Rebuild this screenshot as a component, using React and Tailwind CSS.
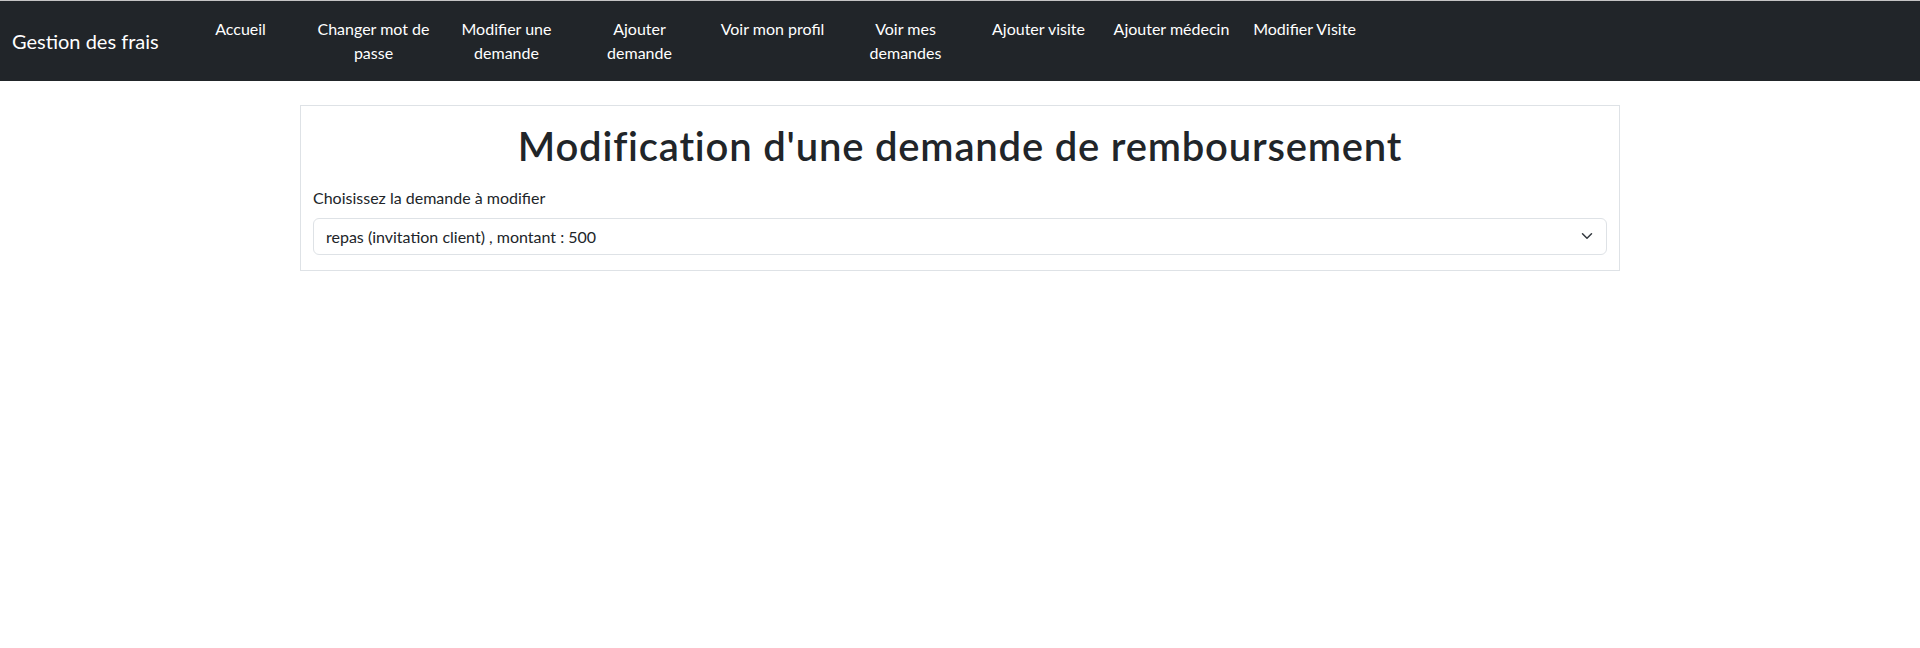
import { useState } from 'react'

// Entrées de la barre de navigation (lignes coupées comme dans l'original)
const NAV_LINKS = [
  ['Accueil'],
  ['Changer mot de', 'passe'],
  ['Modifier une', 'demande'],
  ['Ajouter', 'demande'],
  ['Voir mon profil'],
  ['Voir mes', 'demandes'],
  ['Ajouter visite'],
  ['Ajouter médecin'],
  ['Modifier Visite'],
]

const DEMANDES = ['repas (invitation client) , montant : 500']

function Navbar() {
  return (
    <nav className="flex items-center bg-[#212529] px-3 py-2 border-t border-[#c4c4c4]">
      <a className="w-[146px] mr-4 py-[5px] text-[20px] leading-[30px] text-white whitespace-nowrap">
        Gestion des frais
      </a>
      <ul className="flex items-start">
        {NAV_LINKS.map((lines) => (
          <li key={lines.join(' ')} className="w-[133px] p-2 text-center text-white text-base leading-6 whitespace-nowrap">
            {lines.map((l) => (
              <div key={l}>{l}</div>
            ))}
          </li>
        ))}
      </ul>
    </nav>
  )
}

function App() {
  const [choix, setChoix] = useState(DEMANDES[0])

  return (
    <div className="min-h-screen bg-white text-[#212529]" style={{ fontFamily: 'Lato, "Noto Sans", sans-serif' }}>
      <Navbar />

      <div className="w-[1320px] mx-auto mt-6 border border-[#dee2e6] px-3 pt-4 pb-[15px]">
        <h1 className="text-[40px] leading-[48px] font-semibold tracking-[0.8px] text-center mb-4">
          Modification d'une demande de remboursement
        </h1>

        <label className="block text-base leading-6 mb-2">Choisissez la demande à modifier</label>

        {/* Select stylé façon form-select */}
        <div className="relative">
          <select
            value={choix}
            onChange={(e) => setChoix(e.target.value)}
            className="w-full h-[37px] appearance-none rounded-md border border-[#dee2e6] bg-white pl-3 pr-10 text-base text-[#212529] outline-none"
          >
            {DEMANDES.map((d) => (
              <option key={d}>{d}</option>
            ))}
          </select>
          <svg
            className="pointer-events-none absolute right-3 top-[12px]"
            width="16"
            height="12"
            viewBox="0 0 16 16"
            fill="none"
            stroke="#343a40"
            strokeWidth="2"
            strokeLinecap="round"
            strokeLinejoin="round"
          >
            <path d="m2 5 6 6 6-6" />
          </svg>
        </div>
      </div>
    </div>
  )
}

export default App
